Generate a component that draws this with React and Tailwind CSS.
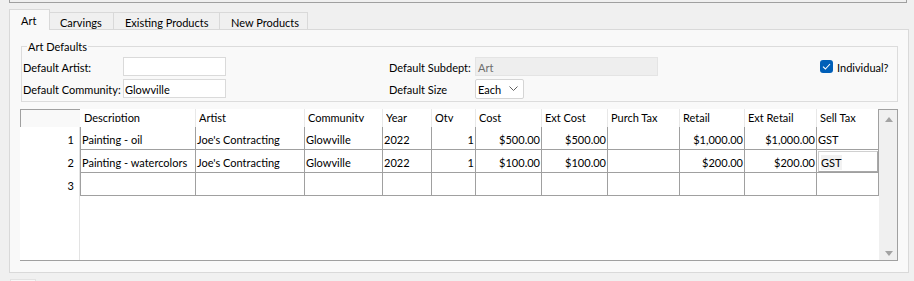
import React from "react";

const cols = [
  { name: "Description", w: "w-[116px]", align: "left", first: true },
  { name: "Artist", w: "w-[109px]", align: "left" },
  { name: "Community", w: "w-[78px]", align: "left" },
  { name: "Year", w: "w-[49px]", align: "left" },
  { name: "Qty", w: "w-[44px]", align: "right" },
  { name: "Cost", w: "w-[66px]", align: "right" },
  { name: "Ext Cost", w: "w-[66px]", align: "right" },
  { name: "Purch Tax", w: "w-[72px]", align: "right" },
  { name: "Retail", w: "w-[65px]", align: "right" },
  { name: "Ext Retail", w: "w-[72px]", align: "right" },
  { name: "Sell Tax", w: "w-[62px]", align: "left" },
];

const rows = [
  ["Painting - oil", "Joe's Contracting", "Glowville", "2022", "1", "$500.00", "$500.00", "", "$1,000.00", "$1,000.00", "GST"],
  ["Painting - watercolors", "Joe's Contracting", "Glowville", "2022", "1", "$100.00", "$100.00", "", "$200.00", "$200.00", "GST"],
  ["", "", "", "", "", "", "", "", "", "", ""],
];

function Cell({ col, value, rowIdx, ci }) {
  const editing = rowIdx === 1 && ci === 10;
  return (
    <div
      className={`${col.w} h-full shrink-0 border-r border-[#a0a0a0] ${col.first ? "border-l" : ""} ${
        editing ? "pt-[1px]" : "flex items-center pt-[2px]"
      } overflow-hidden whitespace-nowrap ${col.align === "right" ? "justify-end pr-[1px]" : "pl-[1px]"}`}
    >
      {editing ? (
        <div className="h-[21px] w-full bg-white border border-[#d0d0d0] border-r-[#a8a8a8] border-b-[#a8a8a8] flex items-center pt-[1px] pl-[2px]">
          <span className="bg-[#f2f2f2] leading-[15px]">{value}</span>
        </div>
      ) : (
        <span className="leading-[15px]">{value}</span>
      )}
    </div>
  );
}

export default function App() {
  return (
    <div className="w-[914px] h-[281px] bg-[#f0f0f0] overflow-hidden text-[11px] text-black font-['Lato',sans-serif] whitespace-nowrap">
      {/* top strip */}
      <div className="ml-[9px] w-[898px] h-[3px] border-x border-b border-[#a0a0a0]" />

      {/* tabs */}
      <div className="ml-[9px] mt-[6px] h-[20px] flex items-end">
        <div className="relative z-10 -mb-[1px] h-[21px] w-[41px] border-l border-t border-r border-[#d9d9d9] bg-[#f9f9f9] pl-[11px] pt-[3px] leading-[15px]">
          Art
        </div>
        <div className="h-[17px] w-[64px] border-t border-r border-[#d9d9d9] pl-[10px] pt-[2px] leading-[15px]">
          Carvings
        </div>
        <div className="h-[17px] w-[106px] border-t border-r border-[#d9d9d9] pl-[11px] pt-[2px] leading-[15px]">
          Existing Products
        </div>
        <div className="h-[17px] w-[88px] border-t border-r border-[#d9d9d9] pl-[11px] pt-[2px] leading-[15px]">
          New Products
        </div>
      </div>

      {/* panel */}
      <div className="ml-[9px] w-[900px] h-[244px] border border-[#d9d9d9] bg-[#f9f9f9]">
        <fieldset className="ml-[11px] mt-[9px] w-[877px] border border-[#dcdcdc] pb-[3px]">
          <legend className="ml-[5px] px-[1px] leading-[15px]">Art Defaults</legend>
          <div className="mt-[3px] pl-[1px] flex items-center h-[19px]">
            <div className="w-[100px] leading-[15px] pt-[1px]">Default Artist:</div>
            <div className="w-[103px] h-[19px] bg-white border border-[#dadada]" />
            <div className="w-[163px]" />
            <div className="w-[86px] leading-[15px] pt-[1px]">Default Subdept:</div>
            <div className="w-[183px] h-[19px] bg-[#eeeeee] border border-[#e4e4e4] pl-[2px] text-[#6d6d6d] leading-[17px] pt-[1px]">
              Art
            </div>
            <div className="w-[162px]" />
            <div className="flex items-center">
              <div className="w-[13px] h-[13px] rounded-[3px] bg-[#005fb8] flex items-center justify-center">
                <svg width="9" height="7" viewBox="0 0 9 7">
                  <path d="M1 3.6 L3.4 6 L8 1" fill="none" stroke="white" strokeWidth="1.1" />
                </svg>
              </div>
              <span className="ml-[4px] leading-[15px] pt-[1px]">Individual?</span>
            </div>
          </div>
          <div className="mt-[3px] pl-[1px] flex items-center h-[19px]">
            <div className="w-[100px] leading-[15px] pt-[1px]">Default Community:</div>
            <div className="w-[103px] h-[19px] bg-white border border-[#dadada] pl-[1px] leading-[17px] pt-[1px]">Glowville</div>
            <div className="w-[163px]" />
            <div className="w-[86px] leading-[15px] pt-[1px]">Default Size</div>
            <div className="w-[49px] h-[20px] bg-white border border-[#d5d5d5] rounded-[2px] flex items-center pl-[2px] pr-[5px] justify-between">
              <span className="leading-[15px] pt-[1px]">Each</span>
              <svg width="9" height="5" viewBox="0 0 9 5">
                <path d="M0.5 0.5 L4.5 4.5 L8.5 0.5" fill="none" stroke="#606060" strokeWidth="1" />
              </svg>
            </div>
          </div>
        </fieldset>

        {/* grid */}
        <div className="ml-[10px] mt-[7px] w-[878px] h-[152px] border-b border-[#a0a0a0] flex bg-white">
          {/* row headers */}
          <div className="w-[60px] shrink-0 flex flex-col">
            <div className="h-[18px] border-t border-l border-[#a0a0a0] bg-[#f9f9f9]" />
            <div className="flex-1 border-r border-[#e3e3e3] bg-white">
              {[1, 2, 3].map((n) => (
                <div key={n} className="h-[23px] flex items-center justify-end pr-[5px] pt-[2px] leading-[15px]">
                  {n}
                </div>
              ))}
            </div>
          </div>

          {/* data */}
          <div className="w-[799px] shrink-0 flex flex-col">
            <div className="h-[18px] flex">
              {cols.map((c, i) => (
                <div
                  key={c.name}
                  className={`${c.w} shrink-0 h-full ${i === 10 ? "border-r border-[#a0a0a0]" : "border-r border-[#e8e8e8]"} ${
                    c.first ? "border-l border-l-white" : ""
                  } pl-[3px] pt-[1px]`}
                >
                  <div className="h-[12px] overflow-hidden leading-[15px] whitespace-nowrap">{c.name}</div>
                </div>
              ))}
            </div>
            {rows.map((r, ri) => (
              <div key={ri} className="h-[23px] flex border-b border-[#a0a0a0]">
                {cols.map((c, ci) => (
                  <Cell key={ci} col={c} value={r[ci]} rowIdx={ri} ci={ci} />
                ))}
              </div>
            ))}
          </div>

          {/* scrollbar */}
          <div className="w-[19px] shrink-0 border-t border-r border-[#a0a0a0] bg-[#f0f0f0] flex flex-col items-center justify-between pt-[7px] pb-[4px] pl-[1px]">
            <svg width="8" height="5" viewBox="0 0 8 5">
              <path d="M4 0 L8 5 L0 5 Z" fill="#a3a3a3" />
            </svg>
            <svg width="8" height="5" viewBox="0 0 8 5">
              <path d="M0 0 L8 0 L4 5 Z" fill="#a3a3a3" />
            </svg>
          </div>
        </div>
      </div>

      <div className="ml-[10px] mt-[6px] w-[26px] h-[3px] bg-[#f8f8f8] border-t border-x border-[#e2e2e2]" />
    </div>
  );
}
